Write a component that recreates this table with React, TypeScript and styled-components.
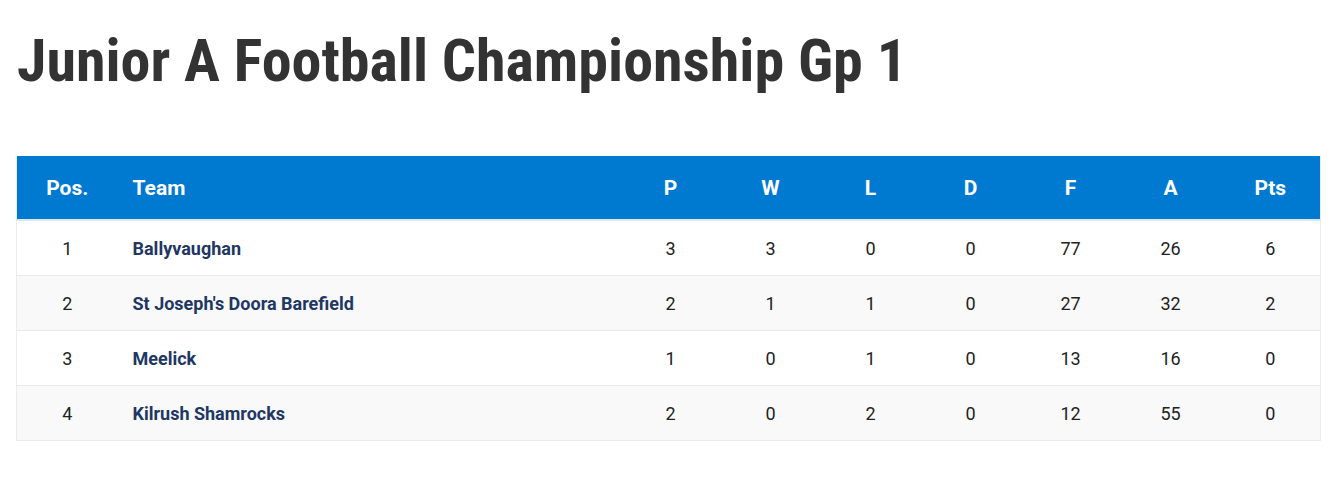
import React from "react";
import styled, { createGlobalStyle } from "styled-components";

const GlobalStyle = createGlobalStyle`
  body {
    margin: 0;
    background: #fff;
    font-family: Roboto, "Liberation Sans", sans-serif;
  }
`;

type Row = {
  pos: number;
  team: string;
  p: number;
  w: number;
  l: number;
  d: number;
  f: number;
  a: number;
  pts: number;
};

const rows: Row[] = [
  { pos: 1, team: "Ballyvaughan", p: 3, w: 3, l: 0, d: 0, f: 77, a: 26, pts: 6 },
  { pos: 2, team: "St Joseph's Doora Barefield", p: 2, w: 1, l: 1, d: 0, f: 27, a: 32, pts: 2 },
  { pos: 3, team: "Meelick", p: 1, w: 0, l: 1, d: 0, f: 13, a: 16, pts: 0 },
  { pos: 4, team: "Kilrush Shamrocks", p: 2, w: 0, l: 2, d: 0, f: 12, a: 55, pts: 0 },
];

const stats: (keyof Row)[] = ["p", "w", "l", "d", "f", "a", "pts"];
const statLabels = ["P", "W", "L", "D", "F", "A", "Pts"];

function App() {
  return (
    <>
      <GlobalStyle />
      <Page>
        <Title>Junior A Football Championship Gp 1</Title>
        <Table>
          <colgroup>
            <col style={{ width: 101 }} />
            <col />
            {stats.map((s) => (
              <col key={s} style={{ width: 100 }} />
            ))}
          </colgroup>
          <thead>
            <tr>
              <HeadCell>Pos.</HeadCell>
              <HeadCell $left>Team</HeadCell>
              {statLabels.map((s) => (
                <HeadCell key={s}>{s}</HeadCell>
              ))}
            </tr>
          </thead>
          <tbody>
            {rows.map((r, i) => (
              <BodyRow key={r.pos} $odd={i % 2 === 1}>
                <Cell>{r.pos}</Cell>
                <TeamCell>{r.team}</TeamCell>
                {stats.map((s) => (
                  <Cell key={s}>{r[s]}</Cell>
                ))}
              </BodyRow>
            ))}
          </tbody>
        </Table>
      </Page>
    </>
  );
}

export default App;

const Page = styled.div`
  padding: 0 22px 0 16px;
`;

const Title = styled.h1`
  margin: 0;
  padding: 21px 0 0 1px;
  height: 156px;
  box-sizing: border-box;
  font-family: Roboto, "Liberation Sans", sans-serif;
  font-stretch: condensed;
  font-weight: 700;
  font-size: 60px;
  line-height: 80px;
  color: #333;
  white-space: nowrap;
`;

const Table = styled.table`
  width: 1305px;
  border-collapse: collapse;
  table-layout: fixed;
  border: 1px solid #ececec;
  border-top: 0;
`;

const HeadCell = styled.th<{ $left?: boolean }>`
  height: 63px;
  padding: 0 0 0 ${(p) => (p.$left ? "15px" : "0")};
  background: #0079d0;
  color: #fff;
  font-size: 21px;
  font-weight: 700;
  text-align: ${(p) => (p.$left ? "left" : "center")};
  border-bottom: 2px solid #dbe8f2;
`;

const BodyRow = styled.tr<{ $odd: boolean }>`
  background: ${(p) => (p.$odd ? "#f9f9f9" : "#fff")};
  border-top: 1px solid #e8e8e8;
  &:first-child {
    border-top: 0;
  }
`;

const Cell = styled.td`
  height: 54px;
  padding: 0;
  text-align: center;
  font-size: 18px;
  color: #222;
`;

const TeamCell = styled.td`
  height: 54px;
  padding: 0 0 0 15px;
  font-size: 18px;
  font-weight: 700;
  color: #1f3763;
`;
